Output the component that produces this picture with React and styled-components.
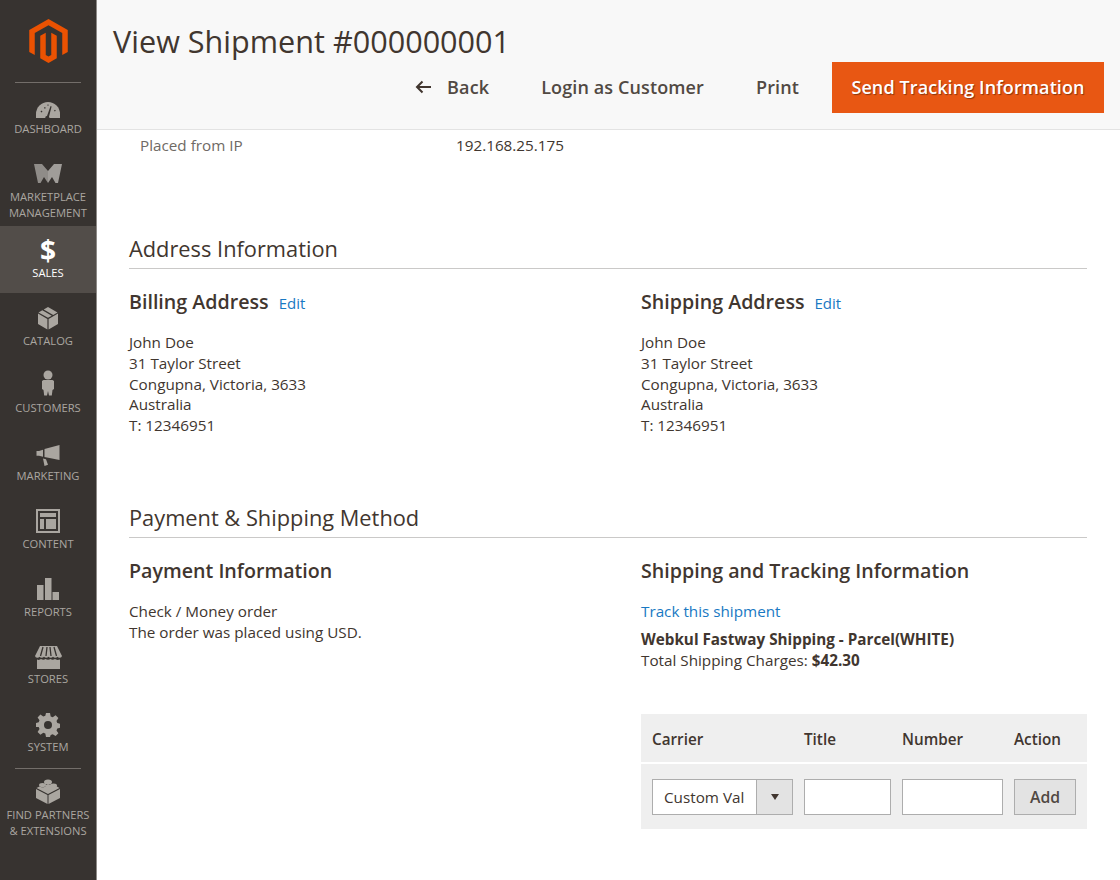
import React from "react"
import styled, { createGlobalStyle } from "styled-components"

const GlobalStyle = createGlobalStyle`
    html, body {
        margin: 0;
        height: 880px;
        overflow: hidden;
        background: #fff;
        font-family: "Open Sans", "Liberation Sans", sans-serif;
        color: #41362f;
    }
`

const Page = styled.div`
    display: grid;
    grid-template-columns: 97px 1fr;
    height: 880px;
    overflow: hidden;
`

const Sidebar = styled.nav`
    background: #373330;
    border-right: 1px solid #8d8a87;
    box-sizing: border-box;
    display: flex;
    flex-direction: column;
`

const LogoBox = styled.div`
    height: 82px;
    display: flex;
    justify-content: center;
    padding-top: 19px;
    box-sizing: border-box;
`

const Divider = styled.div`
    height: 1px;
    margin: 0 15px;
    flex: none;
    background: #736e6a;
`

const NavItem = styled.a`
    height: 67.75px;
    flex: none;
    display: flex;
    flex-direction: column;
    align-items: center;
    justify-content: center;
    margin-bottom: ${(p) => p.$gap || 0}px;
    margin-top: ${(p) => p.$top || 0}px;
    background: ${(p) => (p.$active ? "#524d49" : "transparent")};
    color: ${(p) => (p.$active ? "#fff" : "#aaa6a0")};
`

const NavIcon = styled.div`
    height: 24px;
    margin-bottom: 3px;
    display: flex;
    align-items: center;
    justify-content: center;
    font-size: 28px;
    font-weight: 700;
    line-height: 24px;
    color: ${(p) => (p.$active ? "#fff" : "#aaa6a0")};
`

const NavLabel = styled.div`
    font-size: 11.2px;
    line-height: 16px;
    text-align: center;
    white-space: nowrap;
`

const Main = styled.div`
    display: flex;
    flex-direction: column;
    min-width: 0;
`

const Header = styled.header`
    height: 130px;
    flex: none;
    box-sizing: border-box;
    background: #f8f8f8;
    border-bottom: 1px solid #e3e3e3;
    padding: 19px 16px 0 16px;
`

const Title = styled.h1`
    margin: 0;
    font-size: 30.6px;
    font-weight: 400;
    line-height: 44px;
    color: #41362f;
`

const Actions = styled.div`
    margin-top: -1px;
    display: flex;
    justify-content: flex-end;
    align-items: center;
    gap: 33px;
`

const ActionLink = styled.a`
    display: flex;
    align-items: center;
    gap: 15px;
    margin-left: 19px;
    padding-bottom: 2px;
    font-size: 18px;
    font-weight: 600;
    letter-spacing: 0.12px;
    color: #514943;
`

const PrimaryButton = styled.button`
    height: 51px;
    width: 272px;
    border: 0;
    padding: 0 0 2px;
    background: #e85713;
    color: #fff;
    font: 600 18px "Open Sans", sans-serif;
    letter-spacing: 0.1px;
    text-shadow: 1px 1px 1px rgba(0, 0, 0, 0.4);
`

const Content = styled.main`
    padding: 5px 33px 0 32px;
`

const InfoRow = styled.div`
    display: grid;
    grid-template-columns: 316px 1fr;
    padding-left: 11px;
    font-size: 15.25px;
    line-height: 21px;
`

const InfoLabel = styled.div`
    color: #6f6a65;
`

const Section = styled.section`
    margin-top: ${(p) => p.$top}px;
`

const SectionTitle = styled.h2`
    margin: 0 0 19px;
    padding-bottom: 3px;
    border-bottom: 1px solid #cac9c8;
    font-size: 21.8px;
    font-weight: 400;
    line-height: 32px;
    color: #41362f;
`

const Columns = styled.div`
    display: grid;
    grid-template-columns: 1fr 1fr;
    gap: 66px;
`

const BlockTitle = styled.h3`
    margin: 0 0 ${(p) => p.$gap || 15}px;
    font-size: 19.65px;
    font-weight: 600;
    line-height: 28px;
    color: #41362f;
`

const EditLink = styled.a`
    margin-left: 10px;
    font-size: 15px;
    font-weight: 400;
    color: #1979c3;
`

const Text = styled.div`
    font-size: 15.25px;
    line-height: 20.75px;
`

const LinkLine = styled.a`
    display: block;
    margin-bottom: 7px;
    font-size: 15.25px;
    line-height: 21px;
    color: #1979c3;
`

const CarrierTable = styled.div`
    margin-top: 44px;
    background: #efefef;
`

const TableRow = styled.div`
    display: grid;
    grid-template-columns: 141px 87px 101px 62px;
    column-gap: 11px;
    padding: 0 11px;
    align-items: center;
    height: ${(p) => p.$height}px;
    & + & {
        border-top: 2px solid #fff;
    }
`

const HeadCell = styled.div`
    padding-top: 2px;
    font-size: 15.25px;
    font-weight: 600;
    color: #41362f;
`

const Select = styled.div`
    height: 36px;
    box-sizing: border-box;
    border: 1px solid #adadad;
    background: #fff;
    display: flex;
    align-items: center;
    font-size: 15.25px;
    color: #41362f;
    padding-left: 11px;
    position: relative;
`

const SelectArrow = styled.div`
    position: absolute;
    top: 0;
    right: 0;
    bottom: 0;
    width: 35px;
    background: #e3e3e3;
    border-left: 1px solid #adadad;
    display: flex;
    align-items: center;
    justify-content: center;
    &::after {
        content: "";
        border: 4.5px solid transparent;
        border-top: 6px solid #41362f;
        border-bottom: 0;
    }
`

const Input = styled.input`
    height: 36px;
    width: 100%;
    box-sizing: border-box;
    border: 1px solid #adadad;
    background: #fff;
    margin: 0;
`

const AddButton = styled.button`
    height: 36px;
    padding: 0;
    box-sizing: border-box;
    border: 1px solid #adadad;
    background: #e3e3e3;
    color: #514943;
    font: 600 15.8px "Open Sans", sans-serif;
`

const icons = {
    dashboard: (
        <svg width="26" height="24" viewBox="0 -7 26 24" overflow="visible">
            <path fill="currentColor" d="M1 17v-4a12 12 0 0 1 24 0v4z" />
            <path fill="#373330" d="M12 15l3.600-10 1 .4-2.600 10.400a2 2 0 1 1-2-.8zM5.500 10.500l1-.9 1 1.100-1 .8zM9 6.500l1.200-.5.5 1.300-1.200.4zM12.500 3.500h1v1.300h-1zM19 9.500l1-.8.8 1-1 .8z" />
        </svg>
    ),
    marketplace: (
        <svg width="30" height="20" viewBox="0 0 30 20">
            <path fill="#8f8c88" d="M1 0h8l6 7v12l-4-6-3.500 6H5z" />
            <path fill="#a09d99" d="M29 0h-8l-6 7v12l4-6 3.500 6H25z" />
        </svg>
    ),
    catalog: (
        <svg width="22" height="24" viewBox="0 0 22 24">
            <path fill="currentColor" d="M10.400 23.500L1 18V7.500l9.400 5.400zM11.600 23.500L21 18V7.500l-9.400 5.400zM11 11.800L1.500 6.400 5.300 4.200l9.500 5.500zM16.200 8.900L6.700 3.400 11 1l9.500 5.400z" />
        </svg>
    ),
    customers: (
        <svg width="14" height="30" viewBox="0 0 14 30">
            <circle cx="7" cy="5" r="4.500" fill="currentColor" />
            <path fill="currentColor" d="M2.500 10h9l1.500 1v8l-1.500 1-.7 5.500H8L7 21l-1 4.500H3.200L2.500 20 1 19v-8z" />
        </svg>
    ),
    marketing: (
        <svg width="24" height="27" viewBox="0 -5 24 27">
            <path fill="currentColor" d="M23.500 0v15l-15-3V4zM7 4.700v7l-4-1H.500V6H3zM7 13.500l3 .7 2 5.500-3.500 1.300z" />
        </svg>
    ),
    content: (
        <svg width="24" height="24" viewBox="0 0 24 24">
            <path fill="currentColor" fillRule="evenodd" d="M0 0h24v24H0zM2 2v20h20V2zM4 4h16v4H4zM4 10h4v10H4zM10 10h10v10H10z" />
        </svg>
    ),
    reports: (
        <svg width="24" height="24" viewBox="0 0 24 24">
            <path fill="currentColor" d="M1 8h6.500v15H1zM9 1h6.500v22H9zM16.500 15H23v8h-6.500z" />
        </svg>
    ),
    stores: (
        <svg width="27" height="28" viewBox="0 -4 27 28">
            <path fill="currentColor" d="M5 0h17l5 10a2.500 2.500 0 0 1-4.500.7 3 3 0 0 1-4.500 0 3 3 0 0 1-4.500 0 3 3 0 0 1-4.500 0 3 3 0 0 1-4.500 0A2.500 2.500 0 0 1 0 10zM2 13.500c1.500.7 3 .4 4-.4 1.300 1 3.300 1 4.500 0 1.500 1 3.500 1 5 0 1.200 1 3.200 1 4.500 0 1 .8 2.500 1.100 5 .4V23H2z" />
            <path stroke="#373330" strokeWidth="1.300" d="M8 1L5.500 10M12 1L11 10M15 1L16 10M19 1L21.500 10" />
        </svg>
    ),
    system: (
        <svg width="24" height="26" viewBox="0 -2 24 26">
            <path fill="currentColor" fillRule="evenodd" d="M10 0h4l.7 3.400 2 .8 2.900-1.900 2.800 2.800-1.900 2.900.8 2 2.700.7v4l-2.700.7-.8 2 1.900 2.900-2.800 2.800-2.900-1.900-2 .8L14 24h-4l-.7-3.400-2-.8-2.900 1.900-2.800-2.800 1.900-2.900-.8-2L0 14v-4l2.700-.7.8-2-1.900-2.900 2.800-2.800 2.900 1.900 2-.8zM12 8a4 4 0 1 0 0 8 4 4 0 0 0 0-8z" />
        </svg>
    ),
    partners: (
        <svg width="26" height="25" viewBox="0 0 26 25">
            <path fill="currentColor" d="M12.500 25L1 19v-9l11.500 6zM13.500 25L25 19v-9l-11.500 6zM13 15L1.500 9 5 7.200c.3 1.500 5 1.500 5.400 0 0-.3 0-.5-.2-.8L13 5c1 1 5 1 5 .2l6.500 3.800z" />
            <ellipse cx="13" cy="3" rx="4" ry="2.500" fill="currentColor" />
            <ellipse cx="7.500" cy="6" rx="3.500" ry="2" fill="currentColor" />
            <ellipse cx="18.500" cy="6.500" rx="3.500" ry="2" fill="currentColor" />
            <ellipse cx="13" cy="9.500" rx="3.500" ry="2" fill="currentColor" />
        </svg>
    ),
}

const menu = [
    { key: "dashboard", label: ["DASHBOARD"], top: -1, gap: 8 },
    { key: "marketplace", label: ["MARKETPLACE", "MANAGEMENT"] },
    { key: "sales", label: ["SALES"], active: true },
    { key: "catalog", label: ["CATALOG"] },
    { key: "customers", label: ["CUSTOMERS"] },
    { key: "marketing", label: ["MARKETING"] },
    { key: "content", label: ["CONTENT"] },
    { key: "reports", label: ["REPORTS"] },
    { key: "stores", label: ["STORES"] },
    { key: "system", label: ["SYSTEM"] },
]

function MenuEntry({ item }) {
    return (
        <NavItem $active={item.active} $gap={item.gap} $top={item.top}>
            <NavIcon $active={item.active}>{item.active ? "$" : icons[item.key]}</NavIcon>
            {item.label.map((line) => (
                <NavLabel key={line}>{line}</NavLabel>
            ))}
        </NavItem>
    )
}

function Address() {
    return (
        <Text>
            John Doe
            <br />
            31 Taylor Street
            <br />
            Congupna, Victoria, 3633
            <br />
            Australia
            <br />
            T: 12346951
        </Text>
    )
}

function App() {
    return (
        <>
            <GlobalStyle />
            <Page>
                <Sidebar>
                    <LogoBox>
                        <svg width="39" height="44" viewBox="1.5 0 21 24">
                            <path fill="#eb5202" d="M12 0l10.500 6v12l-3 1.700V7.700L12 3.400 4.500 7.700v12l-3-1.700V6z" />
                            <path fill="#eb5202" d="M10.500 7.500l-3 1.700V21.400L12 24l4.500-2.600V9.200l-3-1.700v12.100L12 20.500l-1.500-.9z" />
                        </svg>
                    </LogoBox>
                    <Divider />
                    {menu.map((item) => (
                        <MenuEntry key={item.key} item={item} />
                    ))}
                    <Divider />
                    <MenuEntry item={{ key: "partners", label: ["FIND PARTNERS", "& EXTENSIONS"], top: 7 }} />
                </Sidebar>
                <Main>
                    <Header>
                        <Title>View Shipment #000000001</Title>
                        <Actions>
                            <ActionLink>
                                <svg width="17" height="14" viewBox="0 0 17 14">
                                    <path fill="none" stroke="#41362f" strokeWidth="2" d="M16 7H2M7.500 1.500L2 7l5.500 5.500" />
                                </svg>
                                Back
                            </ActionLink>
                            <ActionLink>Login as Customer</ActionLink>
                            <ActionLink>Print</ActionLink>
                            <PrimaryButton>Send Tracking Information</PrimaryButton>
                        </Actions>
                    </Header>
                    <Content>
                        <InfoRow>
                            <InfoLabel>Placed from IP</InfoLabel>
                            <div>192.168.25.175</div>
                        </InfoRow>
                        <Section $top={77}>
                            <SectionTitle>Address Information</SectionTitle>
                            <Columns>
                                <div>
                                    <BlockTitle>
                                        Billing Address<EditLink>Edit</EditLink>
                                    </BlockTitle>
                                    <Address />
                                </div>
                                <div>
                                    <BlockTitle>
                                        Shipping Address<EditLink>Edit</EditLink>
                                    </BlockTitle>
                                    <Address />
                                </div>
                            </Columns>
                        </Section>
                        <Section $top={66}>
                            <SectionTitle>Payment &amp; Shipping Method</SectionTitle>
                            <Columns>
                                <div>
                                    <BlockTitle $gap={16}>Payment Information</BlockTitle>
                                    <Text>
                                        Check / Money order
                                        <br />
                                        The order was placed using USD.
                                    </Text>
                                </div>
                                <div>
                                    <BlockTitle $gap={16}>Shipping and Tracking Information</BlockTitle>
                                    <LinkLine>Track this shipment</LinkLine>
                                    <Text>
                                        <strong>Webkul Fastway Shipping - Parcel(WHITE)</strong>
                                        <br />
                                        Total Shipping Charges: <strong>$42.30</strong>
                                    </Text>
                                    <CarrierTable>
                                        <TableRow $height={48}>
                                            <HeadCell>Carrier</HeadCell>
                                            <HeadCell>Title</HeadCell>
                                            <HeadCell>Number</HeadCell>
                                            <HeadCell>Action</HeadCell>
                                        </TableRow>
                                        <TableRow $height={65}>
                                            <Select>
                                                Custom Val
                                                <SelectArrow />
                                            </Select>
                                            <Input />
                                            <Input />
                                            <AddButton>Add</AddButton>
                                        </TableRow>
                                    </CarrierTable>
                                </div>
                            </Columns>
                        </Section>
                    </Content>
                </Main>
            </Page>
        </>
    )
}

export default App
